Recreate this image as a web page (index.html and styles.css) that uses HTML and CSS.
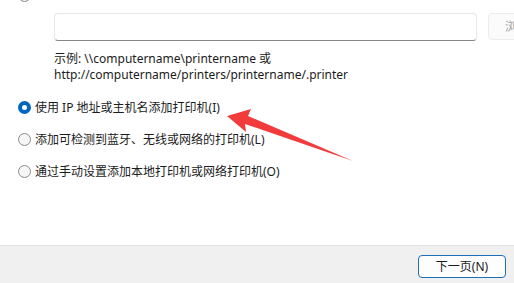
FILE: index.html
```html
<!DOCTYPE html>
<html lang="zh-CN">
<head>
<meta charset="utf-8">
<link rel="stylesheet" href="styles.css">
</head>
<body>
<div class="page">
  <div class="content">
    <span class="radio prev-radio"></span>
    <div class="path-row">
      <div class="text-input"></div>
      <div class="browse-btn">浏览(R)...</div>
    </div>
    <div class="example">
      <div>示例: \\computername\printername 或</div>
      <div>http://computername/printers/printername/.printer</div>
    </div>
    <div class="options">
      <label class="option"><span class="radio checked"></span><span>使用 IP 地址或主机名添加打印机(I)</span></label>
      <label class="option"><span class="radio"></span><span>添加可检测到蓝牙、无线或网络的打印机(L)</span></label>
      <label class="option"><span class="radio"></span><span>通过手动设置添加本地打印机或网络打印机(O)</span></label>
    </div>
  </div>
  <div class="footer">
    <div class="next-btn">下一页(N)</div>
  </div>
  <svg class="arrow" width="514" height="283" viewBox="0 0 514 283">
    <polygon points="227,116 251,109 248,116 353,161 245,124 246,132" fill="#f23c3c"/>
  </svg>
</div>
</body>
</html>
```

FILE: styles.css
```css
* { box-sizing: border-box; }
html, body { margin: 0; padding: 0; }
body {
  background: #ffffff;
  font-family: "Noto Sans", "Noto Sans CJK SC", sans-serif;
  font-size: 12px;
  color: #1b1b1b;
}
.page {
  position: relative;
  width: 514px;
  height: 283px;
  overflow: hidden;
  display: flex;
  flex-direction: column;
}
.content {
  flex: 1;
  display: flex;
  flex-direction: column;
}
.radio {
  display: inline-block;
  flex: none;
  width: 13px;
  height: 13px;
  border-radius: 50%;
  border: 1px solid #8a8a8a;
  background: #f6f6f6;
}
.radio.checked {
  border: 4px solid #0067c0;
  background: #ffffff;
}
.prev-radio {
  margin: -11px 0 0 18px;
}
.path-row {
  display: flex;
  margin: 11px 0 0 54px;
  gap: 11px;
}
.text-input {
  flex: none;
  width: 423px;
  height: 28px;
  border: 1px solid #e6e6e6;
  border-bottom-color: #868686;
  border-radius: 4px;
  background: #ffffff;
}
.browse-btn {
  flex: none;
  width: 70px;
  height: 27px;
  border: 1px solid #ececec;
  border-radius: 4px;
  background: #fbfbfb;
  color: #a3a3a3;
  padding-left: 16px;
  line-height: 25px;
  white-space: nowrap;
  overflow: hidden;
}
.example {
  margin: 10px 0 0 54px;
  line-height: 16px;
}
.options {
  display: flex;
  flex-direction: column;
  gap: 12px;
  margin-top: 14px;
}
.option {
  display: flex;
  align-items: center;
  height: 20px;
  padding-left: 18px;
  gap: 4px;
}
.footer {
  height: 38px;
  border-top: 1px solid #e3e3e3;
  background: #f0f0f0;
  display: flex;
  justify-content: flex-end;
  padding: 9px 8px 0 0;
}
.next-btn {
  width: 88px;
  height: 23px;
  border: 1px solid #1f6fb4;
  border-radius: 4px;
  background: #fdfdfd;
  text-align: center;
  line-height: 21px;
}
.arrow {
  position: absolute;
  left: 0;
  top: 0;
  pointer-events: none;
}
```
